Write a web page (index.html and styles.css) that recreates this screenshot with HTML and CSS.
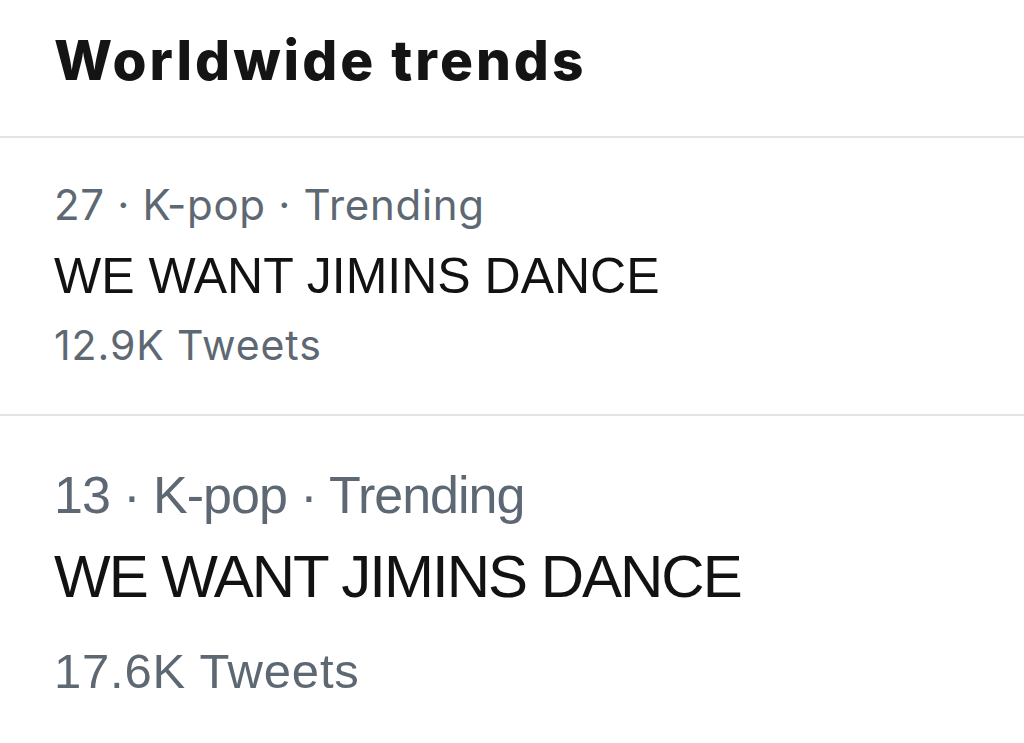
FILE: index.html
```html
<!DOCTYPE html>
<html lang="en">
<head>
<meta charset="utf-8">
<title>Worldwide trends</title>
<link rel="stylesheet" href="styles.css">
</head>
<body>
<section class="panel">
  <header class="panel-head">
    <h2 class="panel-title">Worldwide trends</h2>
  </header>
  <div class="trend trend-a">
    <div class="trend-meta">27 · K-pop · Trending</div>
    <div class="trend-name">WE WANT JIMINS DANCE</div>
    <div class="trend-count">12.9K Tweets</div>
  </div>
  <div class="trend trend-b">
    <div class="trend-meta">13 · K-pop · Trending</div>
    <div class="trend-name">WE WANT JIMINS DANCE</div>
    <div class="trend-count">17.6K Tweets</div>
  </div>
</section>
</body>
</html>
```
FILE: styles.css
```css
html, body {
  margin: 0;
  padding: 0;
  background: #ffffff;
}

body {
  width: 1024px;
  height: 743px;
  overflow: hidden;
  font-family: "Liberation Sans", Arial, sans-serif;
}

.panel {
  display: flex;
  flex-direction: column;
}

.panel-head {
  padding: 30px 0 45px 54px;
  border-bottom: 2px solid #e4e4e6;
}

.panel-title {
  margin: 0;
  font-family: "Inter", "Liberation Sans", sans-serif;
  font-weight: 800;
  font-size: 55px;
  line-height: 61px;
  color: #141414;
  letter-spacing: 3px;
}

.trend {
  display: flex;
  flex-direction: column;
  padding-left: 54px;
}

.trend-meta,
.trend-count {
  color: #5e6873;
}

.trend-name {
  color: #121212;
}

/* first trend */
.trend-a {
  padding-top: 43px;
  padding-bottom: 46px;
  border-bottom: 2px solid #e4e4e6;
}

.trend-a .trend-meta {
  font-family: "Inter", "Liberation Sans", sans-serif;
  font-size: 42px;
  line-height: 48px;
  letter-spacing: 0.7px;
}

.trend-a .trend-name {
  margin-top: 17px;
  font-size: 50px;
  line-height: 60px;
}

.trend-a .trend-count {
  margin-top: 16px;
  font-family: "Inter", "Liberation Sans", sans-serif;
  font-size: 41px;
  line-height: 46px;
  letter-spacing: 0.9px;
}

/* second trend */
.trend-b {
  padding-top: 49px;
}

.trend-b .trend-meta {
  font-size: 52px;
  line-height: 60px;
  letter-spacing: -1px;
}

.trend-b .trend-name {
  margin-top: 17px;
  font-size: 60px;
  line-height: 70px;
  letter-spacing: -2px;
}

.trend-b .trend-count {
  margin-top: 30px;
  font-size: 49px;
  line-height: 58px;
  letter-spacing: 0.8px;
}
```
